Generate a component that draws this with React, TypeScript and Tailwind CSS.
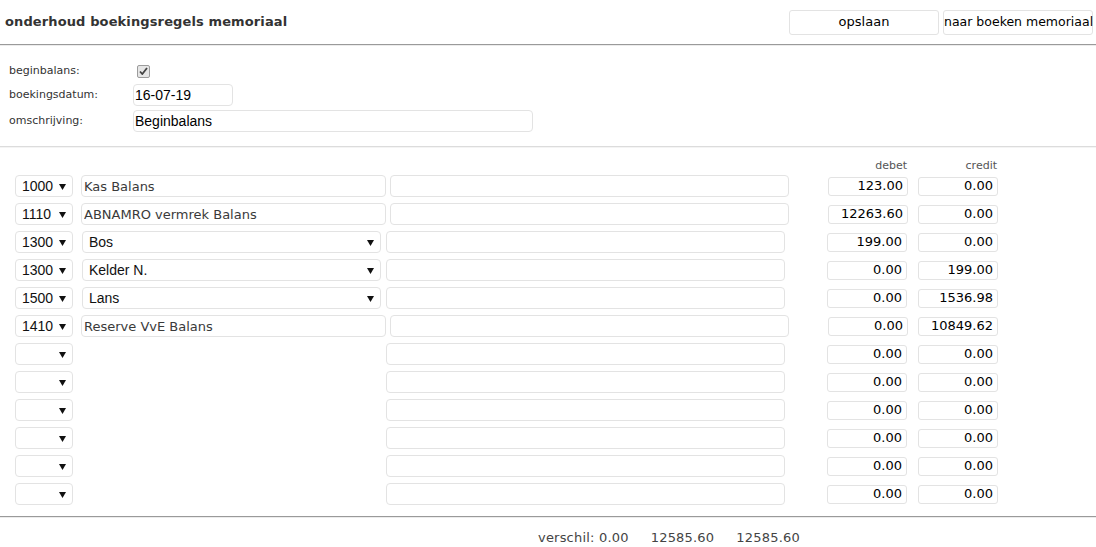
import React from "react";

type Row = {
  account: string;
  name?: string;
  nameIsSelect?: boolean;
  debet: string;
  credit: string;
};

const rows: Row[] = [
  { account: "1000", name: "Kas Balans", debet: "123.00", credit: "0.00" },
  { account: "1110", name: "ABNAMRO vermrek Balans", debet: "12263.60", credit: "0.00" },
  { account: "1300", name: "Bos", nameIsSelect: true, debet: "199.00", credit: "0.00" },
  { account: "1300", name: "Kelder N.", nameIsSelect: true, debet: "0.00", credit: "199.00" },
  { account: "1500", name: "Lans", nameIsSelect: true, debet: "0.00", credit: "1536.98" },
  { account: "1410", name: "Reserve VvE Balans", debet: "0.00", credit: "10849.62" },
  { account: "", debet: "0.00", credit: "0.00" },
  { account: "", debet: "0.00", credit: "0.00" },
  { account: "", debet: "0.00", credit: "0.00" },
  { account: "", debet: "0.00", credit: "0.00" },
  { account: "", debet: "0.00", credit: "0.00" },
  { account: "", debet: "0.00", credit: "0.00" },
];

const verdana = "font-['Verdana','DejaVu_Sans',sans-serif]";
const arial = "font-['Liberation_Sans',Arial,sans-serif]";

function Arrow() {
  return (
    <svg width="7" height="7" viewBox="0 0 7 7" className="shrink-0">
      <polygon points="0,1 7,1 3.5,7" fill="#111" />
    </svg>
  );
}

function FakeSelect({ value, className }: { value: string; className: string }) {
  return (
    <div
      className={`flex items-center justify-between h-[22px] border border-[#e3e3e3] rounded-[4px] bg-white pr-[6px] ${arial} text-[14px] text-[#111] ${className}`}
    >
      <span>{value}</span>
      <Arrow />
    </div>
  );
}

function Line({ dark }: { dark?: boolean }) {
  return (
    <div>
      <div className={`h-px ${dark ? "bg-[#9a9a9a]" : "bg-[#dcdcdc]"}`} />
      <div className={`h-px ${dark ? "bg-[#ececec]" : "bg-[#f4f4f4]"}`} />
    </div>
  );
}

function BookingRow({ row }: { row: Row }) {
  const isText = row.name !== undefined && !row.nameIsSelect;
  return (
    <div className="flex items-center h-[22px]">
      <FakeSelect value={row.account} className="ml-[15px] w-[58px] pl-[6px]" />
      {isText ? (
        <>
          <input
            readOnly
            defaultValue={row.name}
            className={`ml-[8px] w-[305px] h-[22px] border border-[#e3e3e3] rounded-[4px] px-[2px] ${verdana} text-[13px] text-[#3a3a3a] outline-none`}
          />
          <input
            readOnly
            className="ml-[4px] w-[399px] h-[22px] border border-[#e3e3e3] rounded-[4px] outline-none"
          />
          <div className="w-[39px]" />
        </>
      ) : (
        <>
          {row.nameIsSelect ? (
            <FakeSelect value={row.name ?? ""} className="ml-[9px] w-[299px] pl-[6px]" />
          ) : (
            <div className="ml-[9px] w-[299px]" />
          )}
          <input
            readOnly
            className="ml-[5px] w-[399px] h-[22px] border border-[#e3e3e3] rounded-[4px] outline-none"
          />
          <div className="w-[42px]" />
        </>
      )}
      <input
        readOnly
        defaultValue={row.debet}
        className={`w-[80px] h-[19px] border border-[#e3e3e3] rounded-[3px] pr-[4px] text-right ${verdana} text-[13px] text-black outline-none`}
      />
      <input
        readOnly
        defaultValue={row.credit}
        className={`${isText ? "ml-[10px]" : "ml-[11px]"} w-[80px] h-[19px] border border-[#e3e3e3] rounded-[3px] pr-[4px] text-right ${verdana} text-[13px] text-black outline-none`}
      />
    </div>
  );
}

export default function App() {
  return (
    <div className={`w-[1096px] h-[547px] bg-white overflow-hidden ${verdana}`}>
      {/* header */}
      <div className="flex items-center justify-between h-[44px] pl-[5px] pr-[3px]">
        <h1 className="text-[13px] font-bold text-[#333] tracking-[0.12px]">onderhoud boekingsregels memoriaal</h1>
        <div className="flex gap-[4px]">
          <button className="w-[150px] h-[25px] border border-[#e3e3e3] rounded-[3px] bg-white text-[13px] text-black">
            opslaan
          </button>
          <button className="w-[150px] h-[25px] border border-[#e3e3e3] rounded-[3px] bg-white text-[12.5px] text-black whitespace-nowrap">
            naar boeken memoriaal
          </button>
        </div>
      </div>
      <Line dark />

      {/* form */}
      <div className="h-[100px] pt-[18px] pl-[9px] text-[11px] text-[#333]">
        <div className="flex items-center h-[14px]">
          <span className="w-[124px]">beginbalans:</span>
          <div className="ml-[4px] w-[13px] h-[13px] border border-[#9c9c9c] rounded-[2px] bg-[#e6e6e6] flex items-center justify-center">
            <svg width="9" height="8" viewBox="0 0 9 8">
              <path d="M1 4.5 L3.3 7 L8 1" stroke="#444" strokeWidth="1.8" fill="none" />
            </svg>
          </div>
        </div>
        <div className="flex items-center h-[22px] mt-[6px]">
          <span className="w-[124px]">boekingsdatum:</span>
          <input
            readOnly
            defaultValue="16-07-19"
            className={`w-[100px] h-[22px] border border-[#e3e3e3] rounded-[4px] px-[1px] ${arial} text-[14px] text-black outline-none`}
          />
        </div>
        <div className="flex items-center h-[22px] mt-[4px]">
          <span className="w-[124px]">omschrijving:</span>
          <input
            readOnly
            defaultValue="Beginbalans"
            className={`w-[400px] h-[22px] border border-[#e3e3e3] rounded-[4px] px-[1px] ${arial} text-[14px] text-black outline-none`}
          />
        </div>
      </div>
      <Line />

      {/* column headers */}
      <div className="flex h-[27px] items-end pb-[1px] text-[11px] text-[#555]">
        <span className="w-[907px] text-right">debet</span>
        <span className="w-[90px] text-right">credit</span>
      </div>

      {/* booking rows */}
      <div className="flex flex-col gap-[6px]">
        {rows.map((r, i) => (
          <BookingRow key={i} row={r} />
        ))}
      </div>

      <div className="mt-[11px]">
        <Line dark />
      </div>

      {/* totals */}
      <div className="flex items-center h-[40px] text-[13px] text-[#444] tracking-[0.2px]">
        <span className="ml-[538px]">verschil: 0.00</span>
        <span className="ml-[22px]">12585.60</span>
        <span className="ml-[22px]">12585.60</span>
      </div>
    </div>
  );
}
